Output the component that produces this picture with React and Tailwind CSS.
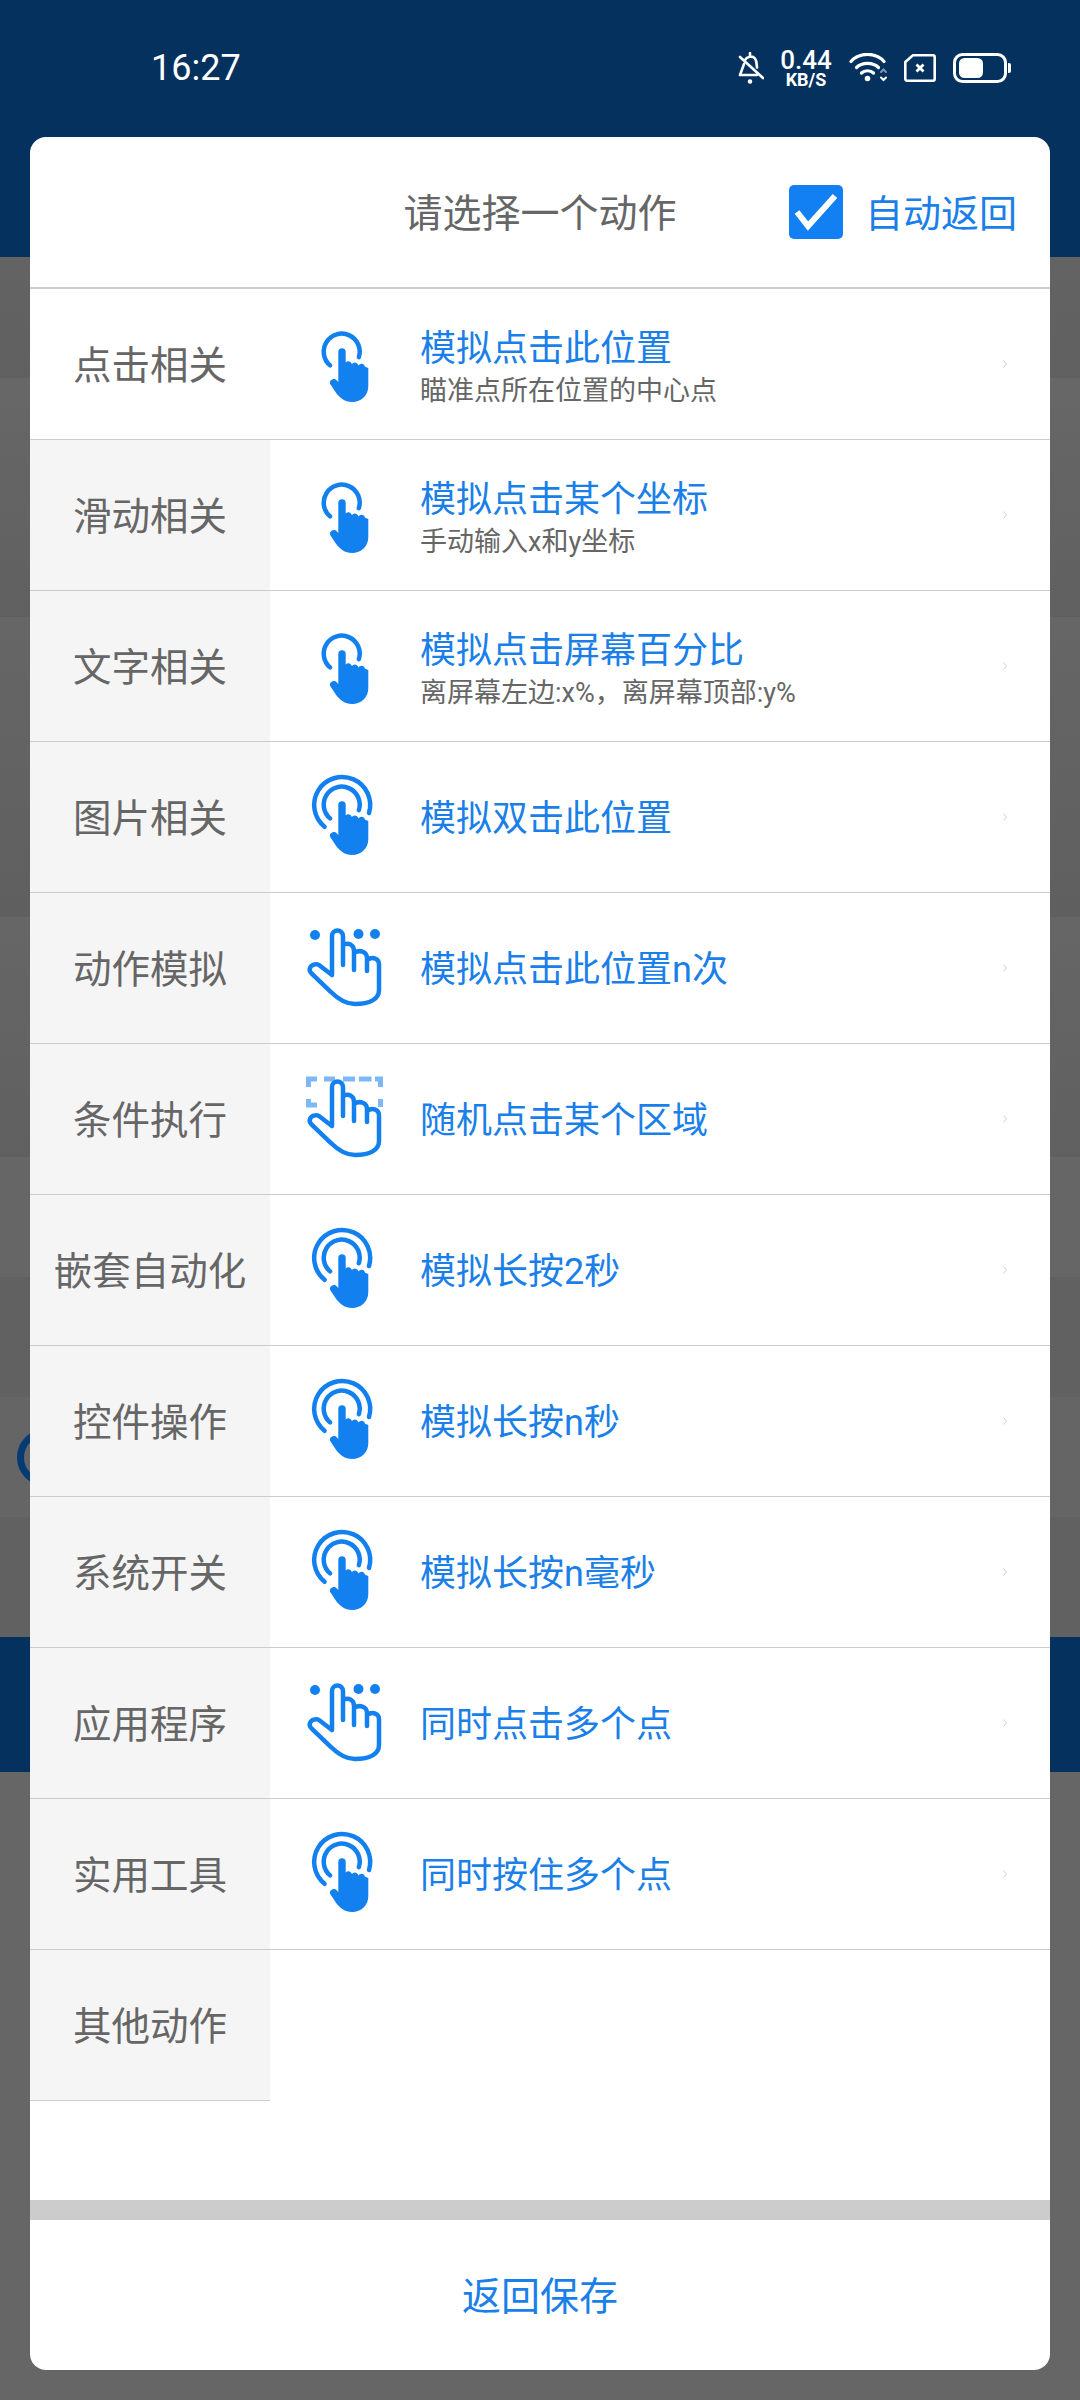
import React from 'react';

const categories = ['点击相关', '滑动相关', '文字相关', '图片相关', '动作模拟', '条件执行', '嵌套自动化', '控件操作', '系统开关', '应用程序', '实用工具', '其他动作'];

const actions = [
  { title: '模拟点击此位置', sub: '瞄准点所在位置的中心点', icon: 'tap' },
  { title: '模拟点击某个坐标', sub: '手动输入x和y坐标', icon: 'tap' },
  { title: '模拟点击屏幕百分比', sub: '离屏幕左边:x%，离屏幕顶部:y%', icon: 'tap' },
  { title: '模拟双击此位置', icon: 'ring' },
  { title: '模拟点击此位置n次', icon: 'dots' },
  { title: '随机点击某个区域', icon: 'area' },
  { title: '模拟长按2秒', icon: 'ring' },
  { title: '模拟长按n秒', icon: 'ring' },
  { title: '模拟长按n毫秒', icon: 'ring' },
  { title: '同时点击多个点', icon: 'dots' },
  { title: '同时按住多个点', icon: 'ring' },
];

const solidHand = 'M41.3 33a3.7 3.7 0 0 1 7.4 0v10.6a3.4 3.4 0 0 1 5.6.4l.6 1a3.5 3.5 0 0 1 6.2.6l.4.9a3.6 3.6 0 0 1 6.6 1.2l3.2 1.3V67c0 9.500-7 16-16.300 16-7 0-12.400-4-16.500-10l-4.800-7.200a3.600 3.600 0 0 1 1-5.100c1.700-1.200 3.700-.8 5.200.7l1.400 1.600z';
const lineHand = 'M35 52V13a5.500 5.500 0 0 1 11 0v29M46 22c6-3 11 0 11 6v19M57 30c6-4 13-1 13 5v13M70 37c6-4 12-1 12 4v26c0 9-9 14-24 14-9 0-17-5-24-12L15 51c-2-2-3-4-2-6 1-3 6-5 9-3l13 10';

const HandIcon = ({ type }) => (
  <svg width="90" height="90" viewBox="0 0 90 90" fill="none" stroke="#1380f0" strokeWidth="4.500" strokeLinecap="round">
    {(type === 'tap' || type === 'ring') && (
      <>
        <path d="M33.100 46.400A18 18 0 1 1 61.850 38.160" />
        {type === 'ring' && <path d="M27.560 54.750A28 28 0 1 1 72 41" />}
        <path d={solidHand} fill="#1380f0" stroke="none" />
      </>
    )}
    {type === 'dots' && (
      <>
        <circle cx="18" cy="12" r="5" fill="#1380f0" stroke="none" />
        <circle cx="61.500" cy="11" r="5" fill="#1380f0" stroke="none" />
        <circle cx="78" cy="11" r="5" fill="#1380f0" stroke="none" />
        <path d={lineHand} />
      </>
    )}
    {type === 'area' && (
      <>
        <path d="M20 5H11.500V13M27 5H38M46 5H58M62 5H74.500M78 5H83.500V13M11.500 25V31H20M83.500 25V33" stroke="#7db7f6" strokeLinecap="butt" strokeWidth="5" />
        <path d={lineHand} />
      </>
    )}
  </svg>
);

const StatusIcons = () => (
  <div className="flex items-center pr-[69px]">
    {/* silent bell */}
    <svg width="26" height="32" viewBox="0 0 26 32" fill="none" stroke="white" strokeWidth="2.600" strokeLinecap="round" strokeLinejoin="round">
      <path d="M12 1v2M7 8c1.500-3 7-5 10-1.500 2 2.500 1.500 6 2 9M6 12L2 23h17" />
      <path d="M2 5l23 21" />
      <circle cx="12" cy="29.500" r="1" fill="white" />
    </svg>
    <div className="ml-[17px] w-[50px] flex flex-col items-center text-white font-['Roboto',sans-serif] font-medium">
      <span className="text-[26px] leading-[22px]">0.44</span>
      <span className="text-[18px] leading-[17px] font-bold">KB/S</span>
    </div>
    {/* wifi */}
    <svg className="ml-[18px]" width="38" height="30" viewBox="0 0 38 30" fill="none" stroke="white" strokeWidth="3.200" strokeLinecap="round">
      <path d="M2 8.500C10-1 27-1 35 8.500" />
      <path d="M7.500 14.500C13 9 24 9 29.500 14.500" />
      <path d="M12.500 20C15.500 17 21.500 17 24.500 20" />
      <circle cx="18.500" cy="25.500" r="2.800" fill="white" stroke="none" />
      <path d="M32 19l2.500-2.500L37 19" stroke="#7f94ad" strokeWidth="2" />
      <path d="M32 24.500L34.500 27 37 24.500" strokeWidth="2" />
    </svg>
    {/* sim without card */}
    <svg className="ml-[17px]" width="32" height="28" viewBox="0 0 32 28" fill="none" stroke="white" strokeWidth="2.600" strokeLinejoin="round">
      <path d="M9 1.300H29a1.700 1.700 0 0 1 1.700 1.700V25a1.700 1.700 0 0 1-1.700 1.700H3A1.700 1.700 0 0 1 1.300 25V8z" />
      <path d="M12.500 10.500l7 7M19.500 10.500l-7 7" strokeWidth="2.800" />
    </svg>
    {/* battery */}
    <svg className="ml-[17px]" width="58" height="30" viewBox="0 0 58 30" fill="none">
      <rect x="1.500" y="1.500" width="51" height="27" rx="8" stroke="white" strokeWidth="3" />
      <rect x="6" y="5" width="24" height="20" rx="5.500" fill="white" />
      <path d="M55 10h1a2 2 0 0 1 2 2v6a2 2 0 0 1-2 2h-1z" fill="white" />
    </svg>
  </div>
);

const Background = () => (
  <div className="flex flex-col h-[2400px] bg-[#666666]">
    <div className="h-[257px] bg-[#05315f]">
      <div className="h-[136px] flex items-center justify-between pl-[151px]">
        <span className="text-white text-[36px] font-['Roboto',sans-serif]">16:27</span>
        <StatusIcons />
      </div>
    </div>
    <div className="h-[121px] bg-gradient-to-b from-[#636363] to-[#606060]"></div>
    <div className="h-[239px] bg-gradient-to-b from-[#676767] to-[#606060]"></div>
    <div className="h-[300px] bg-gradient-to-b from-[#666666] to-[#5f5f5f]"></div>
    <div className="h-[240px] bg-gradient-to-b from-[#666666] to-[#606060]"></div>
    <div className="h-[120px] bg-[#666666]"></div>
    <div className="h-[120px] bg-[#616161]"></div>
    <div className="h-[120px] bg-[#656565] flex items-center pl-[17px]">
      <div className="w-[57px] h-[57px] rounded-full border-[7px] border-[#053b74]"></div>
    </div>
    <div className="h-[120px] bg-[#616161]"></div>
    <div className="h-[135px] bg-[#05315f]"></div>
  </div>
);

export default function App() {
  return (
    <div className="relative w-[1080px] h-[2400px] overflow-hidden font-['Noto_Sans_CJK_SC',sans-serif]">
      <Background />

      {/* Dialog */}
      <div className="absolute left-[30px] top-[137px] w-[1020px] h-[2233px] bg-white rounded-[16px] overflow-hidden flex flex-col">
        <div className="h-[152px] shrink-0 border-b-2 border-[#cccccc] grid grid-cols-[1fr_auto_1fr] items-center">
          <div></div>
          <div className="text-[39px] text-[#666666] pb-[3px]">请选择一个动作</div>
          <div className="flex items-center justify-end pr-[33px] gap-[22px]">
            <div className="w-[54px] h-[54px] rounded-[5px] bg-[#127ff2] flex items-center justify-center">
              <svg width="44" height="38" viewBox="0 0 44 38" fill="none" stroke="white" strokeWidth="6">
                <path d="M3 19l11 14L41 3" />
              </svg>
            </div>
            <span className="text-[38px] text-[#1a7fe8] leading-none pb-[3px]">自动返回</span>
          </div>
        </div>

        <div className="flex-1 flex">
          <div className="w-[240px] shrink-0">
            {categories.map((name, i) => (
              <div key={name} className={`h-[151px] pb-[3px] flex items-center justify-center border-b border-[#cccccc] text-[38.5px] text-[#666666] ${i === 0 ? 'bg-white' : 'bg-[#f5f5f5]'}`}>
                {name}
              </div>
            ))}
          </div>
          <div className="flex-1">
            {actions.map((a) => (
              <div key={a.title} className="h-[151px] flex items-center border-b border-[#cccccc] pl-[27px] pr-[43px]">
                <HandIcon type={a.icon} />
                <div className={`ml-[33px] flex-1 font-['Roboto','Noto_Sans_CJK_SC',sans-serif] ${a.sub ? 'pt-[9px]' : 'pt-[3px]'}`}>
                  <div className="text-[36px] leading-[44px] text-[#1a7fe8]">{a.title}</div>
                  {a.sub && <div className="text-[27px] leading-[40px] text-[#666666]">{a.sub}</div>}
                </div>
                <svg width="4" height="8" viewBox="0 0 4 8" fill="none" stroke="#cccccc" strokeWidth="1">
                  <path d="M0.500 0.500L3.500 4L0.500 7.500" />
                </svg>
              </div>
            ))}
          </div>
        </div>

        <div className="h-[20px] shrink-0 bg-[#cccccc]"></div>
        <div className="h-[150px] pb-[3px] shrink-0 flex items-center justify-center text-[39px] text-[#1a7fe8]">返回保存</div>
      </div>
    </div>
  );
}
